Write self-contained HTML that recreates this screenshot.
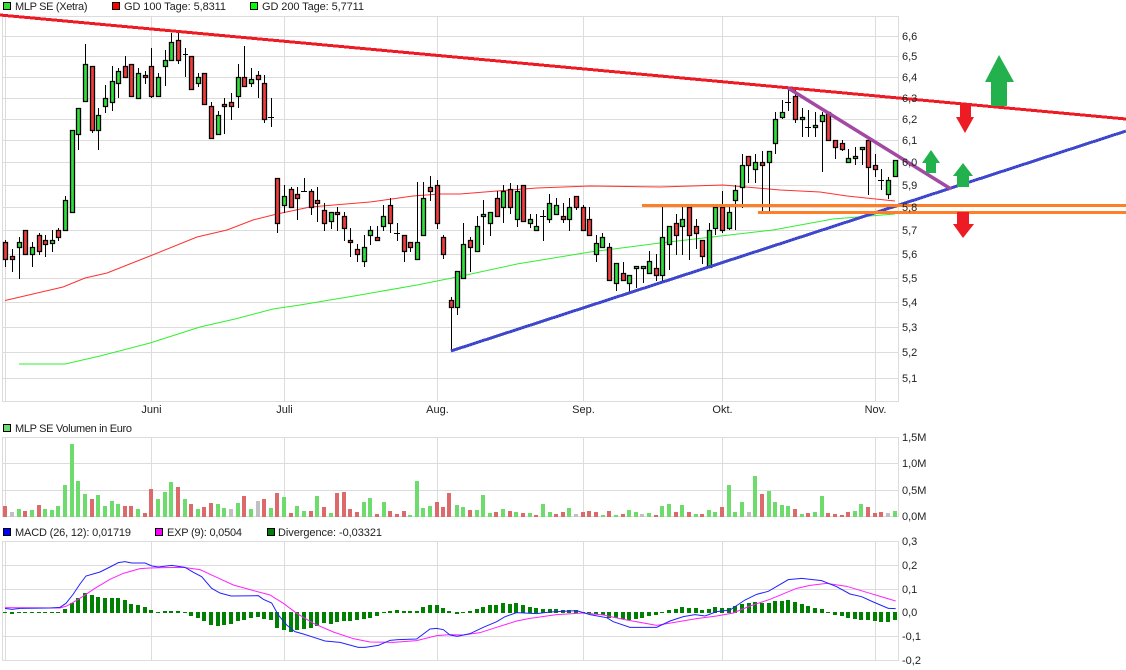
<!DOCTYPE html>
<html>
<head>
<meta charset="utf-8">
<title>MLP SE Chart</title>
<style>
html,body{margin:0;padding:0;background:#fff;width:1126px;height:670px;overflow:hidden}
svg{display:block}
text{font-family:"Liberation Sans",sans-serif;font-size:11px;fill:#222}
</style>
</head>
<body>
<svg width="1126" height="670" viewBox="0 0 1126 670" xmlns="http://www.w3.org/2000/svg">
<rect width="1126" height="670" fill="#fff"/>

<!-- grid -->
<g stroke="#dcdcdc" stroke-width="1" fill="none">
<path d="M2.5 16.5H898M2.5 36.5H898M2.5 56.5H898M2.5 77.5H898M2.5 98.5H898M2.5 119.5H898M2.5 140.5H898M2.5 162.5H898M2.5 185.5H898M2.5 207.5H898M2.5 230.5H898M2.5 254.5H898M2.5 278.5H898M2.5 302.5H898M2.5 327.5H898M2.5 352.5H898M2.5 378.5H898M2.5 401.5H898"/>
<path d="M2.5 16V402M5.5 16V402M151.5 16V402M284.5 16V402M437.5 16V402M583.5 16V402M722.5 16V402M875.5 16V402M898.5 16V402"/>
<path d="M2.5 437.5H898M2.5 463.5H898M2.5 490.5H898M2.5 516.5H898"/>
<path d="M2.5 437V517M5.5 437V517M151.5 437V517M284.5 437V517M437.5 437V517M583.5 437V517M722.5 437V517M875.5 437V517M898.5 437V517"/>
<path d="M2.5 541.5H898M2.5 565.5H898M2.5 589.5H898M2.5 636.5H898M2.5 660.5H898"/>
<path d="M2.5 541V661M5.5 541V661M151.5 541V661M284.5 541V661M437.5 541V661M583.5 541V661M722.5 541V661M875.5 541V661M898.5 541V661"/>
</g>

<!-- moving averages -->
<path fill="none" stroke="#ff3030" stroke-width="1" d="M5 300.5L33 294 63 287 85 278 107 273 150 256 197 237 227 230 253 220 277 214 310 207 370 202 413 196 440 194 460 194 497 191 537 188 590 186 660 187 723 185 780 190 820 192 847 196 895 201"/>
<path fill="none" stroke="#30f030" stroke-width="1" d="M19 364L65 364 100 356 150 343 200 327 235 319 273 309 300 305 360 295 417 285 457 277 517 264 590 252 660 243 773 230 833 219 895 214"/>

<!-- candle wicks -->
<path fill="none" stroke="#000" stroke-width="1" d="M5.5 240V267M12.5 249V272M19.5 237V279M25.5 230V254M32.5 242V267M39.5 233V255M45.5 235V257M52.5 230V252M58.5 228V241M65.5 196V230M72.5 130V212M78.5 108V150M85.5 44V101M92.5 66V133M98.5 108V150M105.5 85V113M112.5 66V111M118.5 68V98M125.5 56V77M131.5 64V96M138.5 68V98M145.5 71V84M151.5 48V98M158.5 73V96M165.5 50V86M171.5 33V60M178.5 33V64M185.5 48V77M191.5 56V89M198.5 73V87M204.5 73V104M211.5 102V138M218.5 111V134M224.5 98V134M231.5 93V120M238.5 64V108M244.5 46V87M251.5 68V87M258.5 71V98M264.5 75V123M271.5 98V127M277.5 178V233M284.5 185V213M291.5 187V207M297.5 187V220M304.5 178V191M311.5 189V215M317.5 187V222M324.5 203V231M331.5 212V229M337.5 207V231M344.5 212V241M350.5 228V257M357.5 244V262M364.5 235V267M370.5 226V245M377.5 226V240M383.5 205V231M390.5 198V233M397.5 223V241M404.5 235V262M410.5 242V252M417.5 182V259M423.5 182V235M430.5 176V201M437.5 180V229M443.5 235V259M451.5 297V352M457.5 271V315M463.5 223V278M470.5 237V272M477.5 216V251M483.5 200V245M490.5 212V236M497.5 191V216M503.5 185V223M510.5 183V214M517.5 185V227M523.5 185V221M530.5 214V228M536.5 214V230M543.5 210V241M549.5 194V223M556.5 198V214M563.5 203V223M569.5 198V231M576.5 196V210M583.5 205V230M589.5 207V235M596.5 235V262M602.5 233V247M609.5 243V280M616.5 263V291M623.5 262V280M629.5 275V292M636.5 266V288M643.5 266V283M649.5 251V273M656.5 254V281M662.5 207V281M669.5 226V270M676.5 214V255M682.5 207V255M689.5 207V260M696.5 219V249M702.5 240V264M709.5 223V267M715.5 207V235M722.5 191V233M729.5 207V230M735.5 185V230M742.5 154V208M748.5 156V183M755.5 154V183M762.5 151V212M769.5 151V212M775.5 112V154M782.5 100V119M788.5 88V111M795.5 88V123M802.5 108V137M808.5 110V137M815.5 112V137M822.5 112V172M828.5 112V140M835.5 140V159M842.5 140V151M848.5 149V162M855.5 147V165M862.5 147V165M868.5 140V195M875.5 154V177M881.5 169V190M888.5 177V199M183 54.5H188M268 117.5H274M301 191.5H307M394 233.5H400M540 216.5H546M785 102.5H791M805 127.5H811M878 180.5H884"/>

<!-- red bodies -->
<path fill="#f03c3c" stroke="#000" stroke-width="1.3" d="M3.500 242.500h4v17h-4zM10.500 256.500h4v3h-4zM23.500 230.500h4v24h-4zM37.500 235.500h4v16h-4zM43.500 240.500h4v4h-4zM56.500 230.500h4v7h-4zM90.500 66.500h4v64h-4zM123.500 66.500h4v11h-4zM129.500 64.500h4v32h-4zM143.500 75.500h4v2h-4zM149.500 66.500h4v30h-4zM176.500 40.500h4v20h-4zM189.500 56.500h4v33h-4zM202.500 73.500h4v31h-4zM209.500 106.500h4v32h-4zM222.500 104.500h4v2h-4zM229.500 102.500h4v4h-4zM242.500 77.500h4v9h-4zM256.500 75.500h4v4h-4zM262.500 83.500h4v36h-4zM275.500 178.500h4v45h-4zM289.500 189.500h4v18h-4zM295.500 194.500h4v4h-4zM309.500 191.500h4v16h-4zM315.500 200.500h4v3h-4zM322.500 210.500h4v13h-4zM335.500 212.500h4v2h-4zM342.500 216.500h4v12h-4zM348.500 240.500h4v2h-4zM355.500 249.500h4v5h-4zM375.500 237.500h4v3h-4zM388.500 205.500h4v18h-4zM402.500 235.500h4v16h-4zM408.500 242.500h4v5h-4zM428.500 187.500h4v4h-4zM435.500 185.500h4v38h-4zM441.500 237.500h4v17h-4zM449.500 300.500h4v7h-4zM468.500 240.500h4v7h-4zM495.500 198.500h4v18h-4zM508.500 189.500h4v18h-4zM521.500 185.500h4v36h-4zM561.500 216.500h4v3h-4zM574.500 196.500h4v11h-4zM581.500 207.500h4v23h-4zM587.500 219.500h4v16h-4zM607.500 247.500h4v33h-4zM621.500 273.500h4v7h-4zM654.500 268.500h4v7h-4zM674.500 223.500h4v12h-4zM687.500 207.500h4v28h-4zM694.500 226.500h4v7h-4zM700.500 240.500h4v16h-4zM720.500 207.500h4v23h-4zM746.500 156.500h4v9h-4zM760.500 162.500h4v3h-4zM793.500 96.500h4v23h-4zM826.500 112.500h4v28h-4zM833.500 140.500h4v7h-4zM840.500 143.500h4v6h-4zM866.500 140.500h4v27h-4zM873.500 165.500h4v4h-4z"/>

<!-- green bodies -->
<path fill="#2fe03a" stroke="#000" stroke-width="1.3" d="M17.500 242.500h4v5h-4zM30.500 247.500h4v7h-4zM50.500 240.500h4v3h-4zM63.500 200.500h4v30h-4zM70.500 130.500h4v82h-4zM76.500 108.500h4v26h-4zM83.500 64.500h4v37h-4zM96.500 115.500h4v15h-4zM103.500 98.500h4v8h-4zM110.500 81.500h4v21h-4zM116.500 71.500h4v12h-4zM136.500 73.500h4v25h-4zM156.500 77.500h4v19h-4zM163.500 60.500h4v6h-4zM169.500 42.500h4v18h-4zM196.500 77.500h4v6h-4zM216.500 115.500h4v19h-4zM236.500 77.500h4v19h-4zM249.500 79.500h4v4h-4zM282.500 196.500h4v9h-4zM329.500 212.500h4v9h-4zM362.500 247.500h4v14h-4zM368.500 230.500h4v5h-4zM381.500 216.500h4v10h-4zM415.500 242.500h4v17h-4zM421.500 198.500h4v37h-4zM455.500 271.500h4v36h-4zM461.500 244.500h4v34h-4zM475.500 226.500h4v25h-4zM481.500 214.500h4v2h-4zM488.500 212.500h4v11h-4zM501.500 191.500h4v16h-4zM515.500 191.500h4v28h-4zM528.500 219.500h4v4h-4zM534.500 226.500h4v4h-4zM547.500 203.500h4v16h-4zM554.500 205.500h4v9h-4zM567.500 207.500h4v12h-4zM594.500 243.500h4v11h-4zM600.500 237.500h4v10h-4zM614.500 263.500h4v20h-4zM627.500 275.500h4v8h-4zM634.500 266.500h4v2h-4zM641.500 266.500h4v2h-4zM647.500 261.500h4v12h-4zM660.500 237.500h4v38h-4zM667.500 226.500h4v18h-4zM680.500 219.500h4v7h-4zM707.500 230.500h4v37h-4zM713.500 207.500h4v21h-4zM727.500 212.500h4v16h-4zM733.500 190.500h4v10h-4zM740.500 165.500h4v22h-4zM753.500 162.500h4v7h-4zM767.500 151.500h4v11h-4zM773.500 119.500h4v24h-4zM780.500 112.500h4v5h-4zM800.500 117.500h4v2h-4zM813.500 125.500h4v2h-4zM820.500 115.500h4v6h-4zM846.500 158.500h4v4h-4zM853.500 156.500h4v2h-4zM860.500 147.500h4v2h-4zM886.500 180.500h4v14h-4zM893.500 160.500h4v16h-4z"/>

<!-- drawn trend lines -->
<path d="M0 15L1126 119" stroke="#ed1c24" stroke-width="3" fill="none" shape-rendering="crispEdges"/>
<path d="M451 351L1126 131" stroke="#3f48cc" stroke-width="3" fill="none" shape-rendering="crispEdges"/>
<path d="M788 88L951 189" stroke="#a349a4" stroke-width="3.5" fill="none"/>
<path d="M642 205.500H1126" stroke="#ff7f27" stroke-width="3" fill="none"/>
<path d="M758 212.500H1126" stroke="#ff7f27" stroke-width="3" fill="none"/>

<!-- arrows -->
<path fill="#22b14c" d="M999 55L1014 82H1007V106H991V82H985Z"/>
<path fill="#ed1c24" d="M960 104H971V117H974L965 133 956 117H960Z"/>
<path fill="#22b14c" d="M931 150L940 163H936V173H926V163H922Z"/>
<path fill="#22b14c" d="M963 163L973 176H969V187H957V176H953Z"/>
<path fill="#ed1c24" d="M957 212H969V224H974L963 238 953 224H957Z"/>

<!-- volume -->
<path fill="#6ddc6d" d="M17 509h4v8h-4zM30 510h4v7h-4zM43 509h4v8h-4zM50 510h4v7h-4zM56 506h4v11h-4zM63 485h4v32h-4zM70 444h4v73h-4zM76 481h4v36h-4zM83 494h4v23h-4zM96 495h4v22h-4zM103 506h4v11h-4zM110 501h4v16h-4zM116 504h4v13h-4zM136 509h4v8h-4zM156 499h4v18h-4zM163 492h4v25h-4zM169 482h4v35h-4zM183 499h4v18h-4zM196 509h4v8h-4zM216 504h4v13h-4zM222 508h4v9h-4zM236 503h4v14h-4zM249 509h4v8h-4zM269 508h4v9h-4zM282 497h4v20h-4zM295 506h4v11h-4zM302 511h4v6h-4zM315 496h4v21h-4zM329 513h4v4h-4zM362 502h4v15h-4zM368 498h4v19h-4zM382 502h4v15h-4zM408 515h4v2h-4zM415 481h4v36h-4zM421 508h4v9h-4zM428 506h4v11h-4zM455 505h4v12h-4zM461 507h4v10h-4zM475 510h4v7h-4zM481 495h4v22h-4zM488 513h4v4h-4zM501 509h4v8h-4zM514 512h4v5h-4zM528 513h4v4h-4zM541 504h4v13h-4zM548 512h4v5h-4zM567 508h4v9h-4zM601 515h4v2h-4zM614 515h4v2h-4zM627 510h4v7h-4zM634 512h4v5h-4zM647 513h4v4h-4zM660 506h4v11h-4zM667 504h4v13h-4zM680 505h4v12h-4zM694 514h4v3h-4zM707 510h4v7h-4zM713 512h4v5h-4zM727 485h4v32h-4zM733 512h4v5h-4zM740 502h4v15h-4zM753 476h4v41h-4zM767 491h4v26h-4zM773 502h4v15h-4zM780 505h4v12h-4zM786 506h4v11h-4zM800 514h4v3h-4zM813 512h4v5h-4zM820 496h4v21h-4zM853 511h4v6h-4zM859 504h4v13h-4zM893 511h4v6h-4z"/>
<path fill="#dc6a6a" d="M3 506h4v11h-4zM23 511h4v6h-4zM37 505h4v12h-4zM90 499h4v18h-4zM123 506h4v11h-4zM129 506h4v11h-4zM143 513h4v4h-4zM149 489h4v28h-4zM176 487h4v30h-4zM189 504h4v13h-4zM202 507h4v10h-4zM209 503h4v14h-4zM242 496h4v21h-4zM262 499h4v18h-4zM275 493h4v24h-4zM289 513h4v4h-4zM309 511h4v6h-4zM322 507h4v10h-4zM335 493h4v24h-4zM342 492h4v25h-4zM348 509h4v8h-4zM355 512h4v5h-4zM375 514h4v3h-4zM388 511h4v6h-4zM395 514h4v3h-4zM402 511h4v6h-4zM435 502h4v15h-4zM441 507h4v10h-4zM447 493h4v24h-4zM468 510h4v7h-4zM494 512h4v5h-4zM508 511h4v6h-4zM521 513h4v4h-4zM534 515h4v2h-4zM554 514h4v3h-4zM561 512h4v5h-4zM581 512h4v5h-4zM587 511h4v6h-4zM594 512h4v5h-4zM607 511h4v6h-4zM621 514h4v3h-4zM654 515h4v2h-4zM674 512h4v5h-4zM687 512h4v5h-4zM700 514h4v3h-4zM720 507h4v10h-4zM760 494h4v23h-4zM793 509h4v8h-4zM806 513h4v4h-4zM826 513h4v4h-4zM833 514h4v3h-4zM840 515h4v2h-4zM846 512h4v5h-4zM866 507h4v10h-4zM873 513h4v4h-4zM879 512h4v5h-4z"/>
<path fill="#c0c0c0" d="M10 512h4v5h-4zM229 509h4v8h-4zM256 501h4v16h-4zM574 514h4v3h-4zM640 514h4v3h-4zM747 512h4v5h-4zM886 513h4v4h-4z"/>

<!-- MACD histogram -->
<path fill="#008000" d="M3 612h4v1h-4zM10 612h4v2h-4zM17 612h4v1h-4zM23 612h4v1h-4zM30 612h4v1h-4zM37 612h4v1h-4zM43 612h4v1h-4zM50 612h4v1h-4zM56 612h4v1h-4zM63 609h4v4h-4zM70 603h4v10h-4zM76 598h4v15h-4zM83 593h4v20h-4zM90 595h4v18h-4zM96 597h4v16h-4zM103 598h4v15h-4zM110 598h4v15h-4zM116 598h4v15h-4zM123 600h4v13h-4zM129 604h4v9h-4zM136 605h4v8h-4zM143 607h4v6h-4zM149 610h4v3h-4zM156 612h4v1h-4zM163 611h4v2h-4zM169 611h4v2h-4zM176 611h4v2h-4zM183 612h4v1h-4zM189 612h4v4h-4zM196 612h4v6h-4zM202 612h4v9h-4zM209 612h4v13h-4zM216 612h4v14h-4zM222 612h4v13h-4zM229 612h4v12h-4zM236 612h4v9h-4zM242 612h4v8h-4zM249 612h4v6h-4zM256 612h4v5h-4zM262 612h4v7h-4zM269 612h4v8h-4zM275 612h4v16h-4zM282 612h4v18h-4zM289 612h4v20h-4zM295 612h4v18h-4zM302 612h4v17h-4zM309 612h4v16h-4zM315 612h4v14h-4zM322 612h4v11h-4zM329 612h4v12h-4zM335 612h4v10h-4zM342 612h4v9h-4zM348 612h4v9h-4zM355 612h4v8h-4zM362 612h4v7h-4zM368 612h4v6h-4zM375 612h4v4h-4zM382 612h4v1h-4zM388 611h4v2h-4zM395 610h4v3h-4zM402 611h4v2h-4zM408 611h4v2h-4zM415 611h4v2h-4zM421 607h4v6h-4zM428 605h4v8h-4zM435 605h4v8h-4zM441 608h4v5h-4zM447 611h4v2h-4zM455 612h4v2h-4zM461 612h4v1h-4zM468 611h4v2h-4zM475 609h4v4h-4zM481 607h4v6h-4zM488 605h4v8h-4zM494 605h4v8h-4zM501 603h4v10h-4zM508 604h4v9h-4zM514 603h4v10h-4zM521 605h4v8h-4zM528 607h4v6h-4zM534 608h4v5h-4zM541 609h4v4h-4zM548 609h4v4h-4zM554 609h4v4h-4zM561 610h4v3h-4zM567 610h4v3h-4zM574 610h4v3h-4zM581 612h4v1h-4zM587 612h4v2h-4zM594 612h4v2h-4zM601 612h4v3h-4zM607 612h4v6h-4zM614 612h4v6h-4zM621 612h4v7h-4zM627 612h4v8h-4zM634 612h4v7h-4zM640 612h4v6h-4zM647 612h4v4h-4zM654 612h4v3h-4zM660 612h4v1h-4zM667 610h4v3h-4zM674 609h4v4h-4zM680 607h4v6h-4zM687 608h4v5h-4zM694 608h4v5h-4zM700 610h4v3h-4zM707 609h4v4h-4zM713 607h4v6h-4zM720 608h4v5h-4zM727 608h4v5h-4zM733 606h4v7h-4zM740 604h4v9h-4zM747 603h4v10h-4zM753 602h4v11h-4zM760 603h4v10h-4zM767 603h4v10h-4zM773 601h4v12h-4zM780 601h4v12h-4zM786 600h4v13h-4zM793 602h4v11h-4zM800 604h4v9h-4zM806 606h4v7h-4zM813 608h4v5h-4zM820 609h4v4h-4zM826 612h4v1h-4zM833 612h4v3h-4zM840 612h4v4h-4zM846 612h4v6h-4zM853 612h4v7h-4zM859 612h4v8h-4zM866 612h4v8h-4zM873 612h4v9h-4zM879 612h4v10h-4zM886 612h4v10h-4zM893 612h4v8h-4z"/>

<!-- MACD lines -->
<g transform="translate(0,520) scale(.33333)" fill="none" stroke-width="3">
<path stroke="#ff22ff" d="M15 263L180 264 200 258 240 235 285 205 330 178 370 160 420 146 450 144 490 143 550 142 600 149 650 172 700 195 750 209 810 225 850 250 890 280 940 310 1000 336 1060 356 1110 366 1180 367 1250 362 1310 347 1350 344 1390 345 1440 338 1490 322 1550 303 1590 295 1670 284 1750 279 1810 285 1870 298 1970 316 2030 306 2090 296 2150 288 2200 279 2250 258 2310 238 2390 205 2430 196 2480 190 2540 199 2600 217 2687 243"/>
<path stroke="#2222ff" d="M15 265L36 268 60 265 150 264 180 262 198 250 220 222 240 192 258 168 300 156 330 141 355 128 375 125 395 129 435 129 456 138 475 141 515 136 555 142 580 157 605 170 635 205 660 219 693 228 775 227 790 238 815 249 835 285 860 315 885 335 910 342 935 350 975 363 1020 367 1075 382 1095 382 1135 376 1170 361 1195 359 1250 357 1290 327 1310 325 1330 329 1350 345 1372 349 1410 341 1450 322 1490 305 1515 290 1550 278 1610 281 1650 276 1730 272 1770 284 1820 293 1840 305 1890 322 1970 322 2010 303 2050 290 2085 284 2115 288 2150 275 2190 270 2235 240 2270 223 2305 214 2365 179 2405 175 2465 182 2510 200 2550 222 2585 230 2620 246 2665 265 2687 266"/>
</g>

<!-- legends -->
<g stroke="#000" stroke-width="1">
<rect x="3.500" y="2.500" width="7" height="7" fill="#33dd33"/>
<rect x="112.500" y="2.500" width="7" height="7" fill="#ff0000"/>
<rect x="250.500" y="2.500" width="7" height="7" fill="#00ff00"/>
<rect x="3.500" y="424.500" width="7" height="7" fill="#6ddc6d"/>
<rect x="3.500" y="528.500" width="7" height="7" fill="#0000ff"/>
<rect x="155.500" y="528.500" width="7" height="7" fill="#ff00ff"/>
<rect x="267.500" y="528.500" width="7" height="7" fill="#008000"/>
</g>
<text x="15" y="10" textLength="72.5" lengthAdjust="spacing">MLP SE (Xetra)</text>
<text x="124" y="10" textLength="102" lengthAdjust="spacing">GD 100 Tage: 5,8311</text>
<text x="262" y="10" textLength="102" lengthAdjust="spacing">GD 200 Tage: 5,7711</text>
<text x="15" y="432" textLength="117" lengthAdjust="spacing">MLP SE Volumen in Euro</text>
<text x="15" y="536" textLength="116" lengthAdjust="spacing">MACD (26, 12): 0,01719</text>
<text x="167" y="536" textLength="75" lengthAdjust="spacing">EXP (9): 0,0504</text>
<text x="278" y="536" textLength="104" lengthAdjust="spacing">Divergence: -0,03321</text>

<!-- x axis -->
<g text-anchor="middle">
<text x="151.500" y="413">Juni</text>
<text x="284.500" y="413">Juli</text>
<text x="437.500" y="413">Aug.</text>
<text x="583.500" y="413">Sep.</text>
<text x="722.500" y="413">Okt.</text>
<text x="875.500" y="413">Nov.</text>
</g>

<!-- y axes -->
<text x="902" y="40">6,6</text>
<text x="902" y="60">6,5</text>
<text x="902" y="81">6,4</text>
<text x="902" y="102">6,3</text>
<text x="902" y="123">6,2</text>
<text x="902" y="144">6,1</text>
<text x="902" y="166">6,0</text>
<text x="902" y="189">5,9</text>
<text x="902" y="211">5,8</text>
<text x="902" y="234">5,7</text>
<text x="902" y="258">5,6</text>
<text x="902" y="282">5,5</text>
<text x="902" y="306">5,4</text>
<text x="902" y="331">5,3</text>
<text x="902" y="356">5,2</text>
<text x="902" y="382">5,1</text>
<text x="902" y="441">1,5M</text>
<text x="902" y="467">1,0M</text>
<text x="902" y="494">0,5M</text>
<text x="902" y="520">0,0M</text>
<text x="902" y="545">0,3</text>
<text x="902" y="569">0,2</text>
<text x="902" y="593">0,1</text>
<text x="902" y="616">0,0</text>
<text x="902" y="640">-0,1</text>
<text x="902" y="664">-0,2</text>
</svg>
</body>
</html>
